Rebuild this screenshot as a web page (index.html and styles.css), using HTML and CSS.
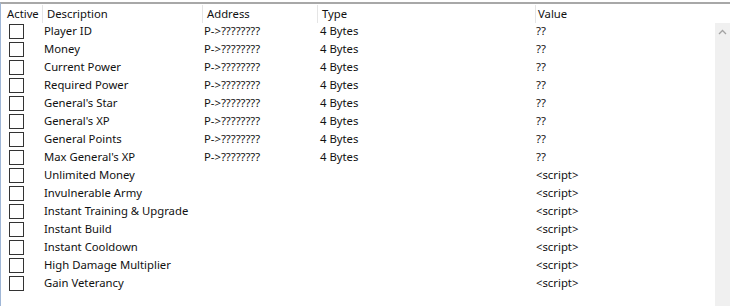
FILE: index.html
```html
<!DOCTYPE html>
<html lang="en">
<head>
  <meta charset="UTF-8">
  <title>Cheat Table</title>
  <link rel="stylesheet" href="styles.css">
</head>
<body>
  <div class="list">
    <div class="header">
      <div class="col col-active">Active</div>
      <div class="col col-desc">Description</div>
      <div class="col col-addr">Address</div>
      <div class="col col-type">Type</div>
      <div class="col col-value">Value</div>
    </div>
    <div class="body">
      <div class="rows" id="rows"></div>
      <div class="scrollbar">
        <svg class="arrow" width="9" height="6" viewBox="0 0 9 6">
          <path d="M1 5 L4.5 1.5 L8 5" fill="none" stroke="#a3a3a3" stroke-width="1.3"/>
        </svg>
      </div>
    </div>
  </div>

  <script>
    const entries = [
      ['Player ID', 'P->????????', '4 Bytes', '??'],
      ['Money', 'P->????????', '4 Bytes', '??'],
      ['Current Power', 'P->????????', '4 Bytes', '??'],
      ['Required Power', 'P->????????', '4 Bytes', '??'],
      ["General's Star", 'P->????????', '4 Bytes', '??'],
      ["General's XP", 'P->????????', '4 Bytes', '??'],
      ['General Points', 'P->????????', '4 Bytes', '??'],
      ["Max General's XP", 'P->????????', '4 Bytes', '??'],
      ['Unlimited Money', '', '', '<script>'],
      ['Invulnerable Army', '', '', '<script>'],
      ['Instant Training & Upgrade', '', '', '<script>'],
      ['Instant Build', '', '', '<script>'],
      ['Instant Cooldown', '', '', '<script>'],
      ['High Damage Multiplier', '', '', '<script>'],
      ['Gain Veterancy', '', '', '<script>']
    ];

    const rows = document.getElementById('rows');

    entries.forEach((entry) => {
      const row = document.createElement('div');
      row.className = 'row';

      const active = document.createElement('div');
      active.className = 'col col-active';
      const box = document.createElement('span');
      box.className = 'checkbox';
      active.appendChild(box);
      row.appendChild(active);

      ['col-desc', 'col-addr', 'col-type', 'col-value'].forEach((name, i) => {
        const cell = document.createElement('div');
        cell.className = 'col ' + name;
        cell.textContent = entry[i];
        row.appendChild(cell);
      });

      rows.appendChild(row);
    });
  </script>
</body>
</html>
```

FILE: styles.css
```css
html, body {
  margin: 0;
  padding: 0;
  background: #ffffff;
}

body {
  font-family: "Noto Sans", "Open Sans", sans-serif;
  font-size: 11.3px;
  color: #111111;
  width: 730px;
  height: 306px;
  overflow: hidden;
}

.list {
  margin-top: 2px;
  border-top: 2px solid #a8a8a8;
  border-left: 1px solid #9fb6d6;
  height: 302px;
  display: flex;
  flex-direction: column;
}

.header {
  display: flex;
  height: 18px;
  margin-top: 1px;
  align-items: center;
}

.header .col {
  height: 18px;
  line-height: 18px;
  border-right: 1px solid #e5e5e5;
  box-sizing: border-box;
  padding-left: 4px;
}

.header .col-active {
  padding-left: 6px;
}

.header .col-value {
  border-right: none;
  padding-left: 2px;
}

.body {
  display: flex;
  flex: 1;
}

.rows {
  flex: 1;
  margin-top: -1px;
}

.row {
  display: flex;
  height: 18px;
  line-height: 18px;
}

.row .col {
  box-sizing: border-box;
  white-space: nowrap;
}

.col-active { width: 42px; }
.col-desc { width: 160px; }
.col-addr { width: 115px; }
.col-type { width: 218px; }
.col-value { flex: 1; }

.row .col-active {
  display: flex;
  align-items: center;
  padding-left: 8px;
}

.row .col-desc { padding-left: 1px; }
.row .col-addr { padding-left: 1px; }
.row .col-type { padding-left: 2px; }
.row .col-value { padding-left: 0; }

.checkbox {
  width: 15px;
  height: 15px;
  box-sizing: border-box;
  border: 1px solid #333333;
  background: #ffffff;
}

.scrollbar {
  width: 15px;
  background: #f0f0f0;
  display: flex;
  justify-content: center;
  padding-top: 6px;
  box-sizing: border-box;
}

.arrow {
  display: block;
}
```
